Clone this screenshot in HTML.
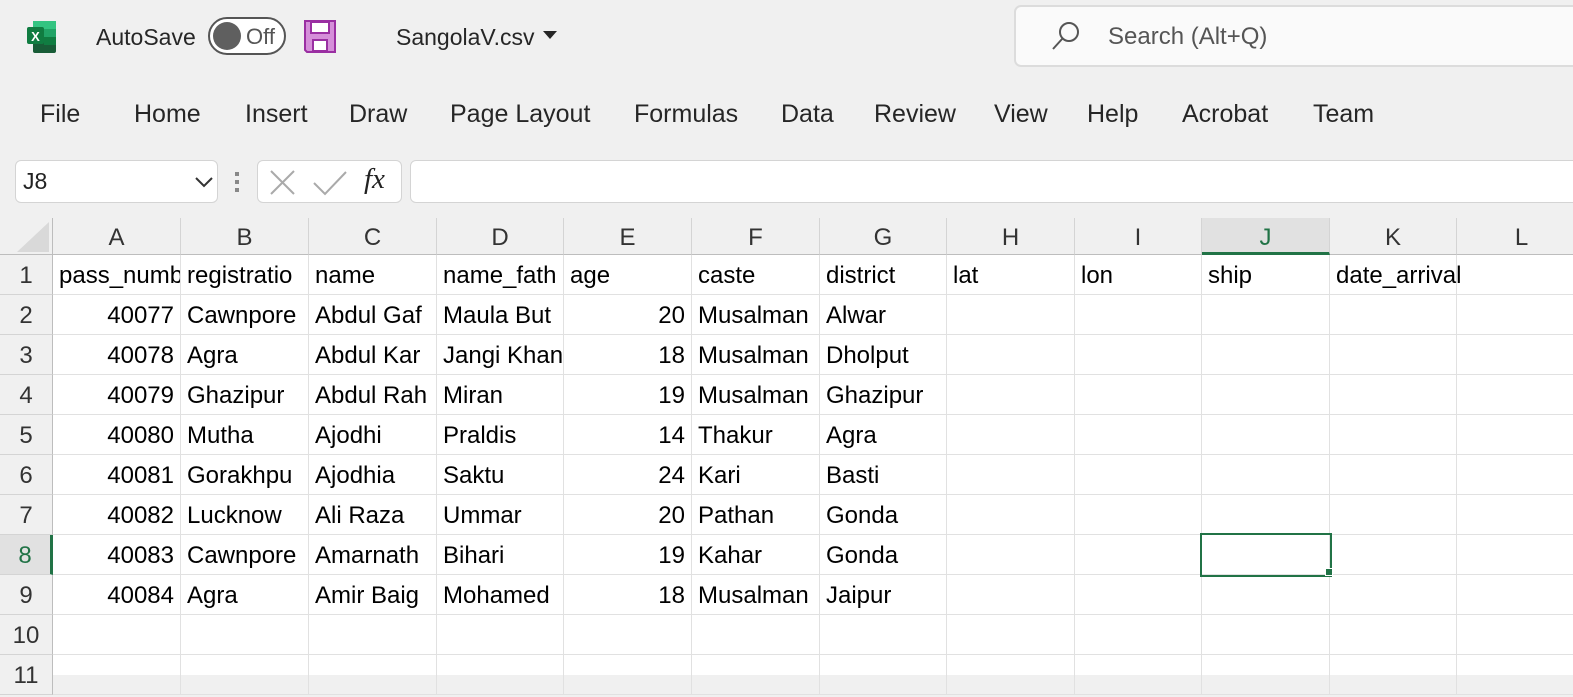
<!DOCTYPE html>
<html><head><meta charset="utf-8"><style>
*{margin:0;padding:0;box-sizing:border-box}
body{width:1573px;height:675px;overflow:hidden;background:#f0f0f0;font-family:"Liberation Sans",sans-serif;color:#262626;position:relative}
.a{position:absolute;white-space:nowrap}
.tab{position:absolute;top:100px;font-size:25px;color:#262626}
.grid{position:absolute;left:0;top:218px;width:1573px;height:457px;background:#fff}
.ch{position:absolute;top:0;height:37px;border-right:1px solid #d4d4d4;border-bottom:1px solid #bdbdbd;background:#f0f0f0;text-align:center;font-size:24px;line-height:40px;color:#333}
.rh{position:absolute;left:0;width:53px;height:40px;border-right:1px solid #bdbdbd;border-bottom:1px solid #d4d4d4;background:#f0f0f0;text-align:center;font-size:24px;line-height:42px;color:#333}
.c{position:absolute;height:40px;border-right:1px solid #e1e1e1;border-bottom:1px solid #e1e1e1;font-size:24px;line-height:42px;color:#000;overflow:hidden;padding:0 6px;white-space:nowrap}
.r{text-align:right}
</style></head><body>
<svg class="a" style="left:27px;top:20px" width="30" height="34" viewBox="0 0 30 34">
<rect x="6" y="1" width="23" height="32" rx="2" fill="#185c37"/>
<rect x="6" y="1" width="23" height="8" fill="#33c481"/>
<rect x="17" y="9" width="12" height="8" fill="#21a366"/>
<rect x="6" y="9" width="11" height="8" fill="#21a366"/>
<rect x="17" y="17" width="12" height="8" fill="#107c41"/>
<rect x="0" y="7" width="17" height="17" rx="2" fill="#107c41"/>
<text x="8.5" y="21" font-size="13" font-weight="bold" fill="#fff" text-anchor="middle" font-family="Liberation Sans">X</text>
</svg>
<div class="a" style="left:96px;top:24px;font-size:23px">AutoSave</div>
<div class="a" style="left:208px;top:17px;width:78px;height:38px;border:2px solid #555;border-radius:20px;background:#fff"></div>
<div class="a" style="left:213px;top:22px;width:28px;height:28px;border-radius:50%;background:#5f5f5f"></div>
<div class="a" style="left:246px;top:24px;font-size:22px;color:#555">Off</div>
<svg class="a" style="left:304px;top:20px" width="32" height="33" viewBox="0 0 32 33">
<path d="M1 1H31V32H3L1 30Z" fill="#d58fd9" stroke="#9a2fa2" stroke-width="2"/>
<rect x="7" y="2" width="18" height="11" fill="#fff" stroke="#9a2fa2" stroke-width="2"/>
<rect x="9" y="20" width="14" height="11" fill="#fff" stroke="#9a2fa2" stroke-width="2"/>
</svg>
<div class="a" style="left:396px;top:24px;font-size:23px">SangolaV.csv</div>
<svg class="a" style="left:543px;top:31px" width="14" height="9"><path d="M0 0H14L7 8Z" fill="#262626"/></svg>
<div class="a" style="left:1014px;top:5px;width:600px;height:62px;background:#fafafa;border:2px solid #dcdcdc;border-radius:7px"></div>
<svg class="a" style="left:1050px;top:20px" width="32" height="32" viewBox="0 0 32 32"><circle cx="19" cy="12" r="9" fill="none" stroke="#555" stroke-width="2"/><path d="M12.5 18.5L3 29" stroke="#555" stroke-width="2"/></svg>
<div class="a" style="left:1108px;top:23px;font-size:24px;color:#555">Search (Alt+Q)</div>
<div class="tab" style="left:40px">File</div>
<div class="tab" style="left:134px">Home</div>
<div class="tab" style="left:245px">Insert</div>
<div class="tab" style="left:349px">Draw</div>
<div class="tab" style="left:450px">Page Layout</div>
<div class="tab" style="left:634px">Formulas</div>
<div class="tab" style="left:781px">Data</div>
<div class="tab" style="left:874px">Review</div>
<div class="tab" style="left:994px">View</div>
<div class="tab" style="left:1087px">Help</div>
<div class="tab" style="left:1182px">Acrobat</div>
<div class="tab" style="left:1313px">Team</div>
<div class="a" style="left:15px;top:160px;width:203px;height:43px;background:#fff;border:1px solid #d4d4d4;border-radius:6px"></div>
<div class="a" style="left:23px;top:168px;font-size:23px;color:#222">J8</div>
<svg class="a" style="left:195px;top:177px" width="18" height="11"><path d="M1 1L9 9L17 1" fill="none" stroke="#333" stroke-width="2"/></svg>
<div class="a" style="left:235px;top:172px;width:4px;height:4px;background:#888"></div>
<div class="a" style="left:235px;top:180px;width:4px;height:4px;background:#888"></div>
<div class="a" style="left:235px;top:188px;width:4px;height:4px;background:#888"></div>
<div class="a" style="left:257px;top:160px;width:145px;height:43px;background:#fff;border:1px solid #d4d4d4;border-radius:6px"></div>
<svg class="a" style="left:268px;top:168px" width="30" height="28"><path d="M3 3L26 26M26 3L3 26" stroke="#aaa" stroke-width="2"/></svg>
<svg class="a" style="left:312px;top:170px" width="36" height="26"><path d="M2 13L13 24L34 2" fill="none" stroke="#aaa" stroke-width="2"/></svg>
<div class="a" style="left:364px;top:163px;font-size:29px;font-style:italic;font-family:'Liberation Serif',serif;color:#222">fx</div>
<div class="a" style="left:410px;top:160px;width:1180px;height:43px;background:#fff;border:1px solid #d4d4d4;border-radius:6px"></div>
<div class="grid">
<div class="a" style="left:0;top:0;width:53px;height:37px;background:#f0f0f0;border-right:1px solid #bdbdbd;border-bottom:1px solid #bdbdbd"></div>
<svg class="a" style="left:17px;top:4px" width="32" height="30"><path d="M32 0V30H0Z" fill="#d9d9d9"/></svg>
<div class="ch" style="left:53px;width:128px">A</div>
<div class="ch" style="left:181px;width:128px">B</div>
<div class="ch" style="left:309px;width:128px">C</div>
<div class="ch" style="left:437px;width:127px">D</div>
<div class="ch" style="left:564px;width:128px">E</div>
<div class="ch" style="left:692px;width:128px">F</div>
<div class="ch" style="left:820px;width:127px">G</div>
<div class="ch" style="left:947px;width:128px">H</div>
<div class="ch" style="left:1075px;width:127px">I</div>
<div class="ch" style="left:1202px;width:128px;background:#e1e1e1;border-bottom:3px solid #217346;color:#217346">J</div>
<div class="ch" style="left:1330px;width:127px">K</div>
<div class="ch" style="left:1457px;width:130px">L</div>
<div id="rows"></div>
</div>
<script>
(function(){
var cols=[53,181,309,437,564,692,820,947,1075,1202,1330,1457,1590];
var data=[
["pass_numb","registratio","name","name_fath","age","caste","district","lat","lon","ship","date_arrival",""],
["40077","Cawnpore","Abdul Gaf","Maula But","20","Musalman","Alwar"],
["40078","Agra","Abdul Kar","Jangi Khan","18","Musalman","Dholput"],
["40079","Ghazipur","Abdul Rah","Miran","19","Musalman","Ghazipur"],
["40080","Mutha","Ajodhi","Praldis","14","Thakur","Agra"],
["40081","Gorakhpu","Ajodhia","Saktu","24","Kari","Basti"],
["40082","Lucknow","Ali Raza","Ummar","20","Pathan","Gonda"],
["40083","Cawnpore","Amarnath","Bihari","19","Kahar","Gonda"],
["40084","Agra","Amir Baig","Mohamed","18","Musalman","Jaipur"],
[],[]];
var h="";
for(var r=0;r<11;r++){
 var y=37+r*40;
 var sel=r==7;
 h+='<div class="rh" style="top:'+y+'px;'+(sel?'background:#e1e1e1;color:#217346;border-right:3px solid #217346':'')+'">'+(r+1)+'</div>';
 for(var c=0;c<12;c++){
  var v=(data[r]||[])[c]||"";
  var num=r>0&&(c==0||c==4);
  var ov=(r==0&&c==10)?'overflow:visible;':'';
  h+='<div class="c'+(num?' r':'')+'" style="left:'+cols[c]+'px;top:'+y+'px;width:'+(cols[c+1]-cols[c])+'px;'+ov+'">'+v+'</div>';
 }
}
h+='<div class="a" style="left:1200px;top:'+(37+7*40-2)+'px;width:132px;height:44px;border:2px solid #217346"></div>';
h+='<div class="a" style="left:1325px;top:'+(37+8*40-7)+'px;width:8px;height:8px;background:#217346;border:1px solid #fff"></div>';
document.getElementById("rows").innerHTML=h;
})();
</script>
</body></html>
